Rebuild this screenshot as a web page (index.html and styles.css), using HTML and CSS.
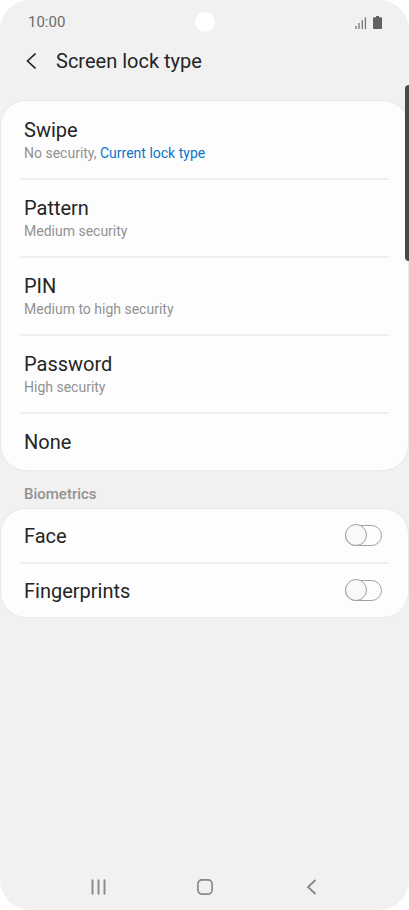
FILE: index.html
```html
<!DOCTYPE html>
<html lang="en">
<head>
<meta charset="utf-8">
<meta name="viewport" content="width=device-width, initial-scale=1">
<title>Screen lock type</title>
<link rel="stylesheet" href="styles.css">
</head>
<body>
<div class="phone">
  <div class="status">
    <span>10:00</span>
    <span class="camera"></span>
    <span class="status-icons">
      <svg width="12" height="12" viewBox="0 0 12 12" stroke="#777" stroke-width="1.3"><path d="M1 9v3M4 6v6M7.3 3v9M10.4 0.500v11.500"/></svg>
      <svg width="9" height="13" viewBox="0 0 9 13" fill="#626262"><path d="M3 0h3v1.200h2q1 0 1 1v9.800q0 1-1 1H1q-1 0-1-1V2.200q0-1 1-1h2z"/></svg>
    </span>
  </div>
  <header class="header">
    <button class="back" type="button" aria-label="Back">
      <svg width="10" height="16" viewBox="0 0 10 16" fill="none" stroke="#252525" stroke-width="1.600"><path d="M9.500 .5L1.500 8l8 7.500"/></svg>
    </button>
    <h1>Screen lock type</h1>
  </header>
  <span class="side-key"></span>
  <main>
    <div class="card">
      <button class="row option" type="button"><span class="title">Swipe</span><span class="sub">No security, <span class="current">Current lock type</span></span></button>
      <button class="row option" type="button"><span class="title">Pattern</span><span class="sub">Medium security</span></button>
      <button class="row option" type="button"><span class="title">PIN</span><span class="sub">Medium to high security</span></button>
      <button class="row option" type="button"><span class="title">Password</span><span class="sub">High security</span></button>
      <button class="row option" type="button"><span class="title">None</span></button>
    </div>
    <h2>Biometrics</h2>
    <div class="card">
      <label class="row toggle"><span class="title">Face</span><input class="switch" type="checkbox" role="switch"></label>
      <label class="row toggle"><span class="title">Fingerprints</span><input class="switch" type="checkbox" role="switch"></label>
    </div>
  </main>
  <nav class="nav">
    <button type="button" aria-label="Recent apps"><svg width="16" height="16" viewBox="0 0 16 16" stroke="#888" stroke-width="1.900" stroke-linecap="round"><path d="M2.500 1.300v13.400M8.500 1.300v13.400M14.500 1.300v13.400"/></svg></button>
    <button type="button" aria-label="Home"><svg width="16" height="16" viewBox="0 0 16 16" fill="none" stroke="#888" stroke-width="1.700"><rect x=".9" y=".9" width="14.200" height="14.200" rx="4"/></svg></button>
    <button type="button" aria-label="Back"><svg width="16" height="16" viewBox="0 0 16 16" fill="none" stroke="#888" stroke-width="1.800"><path d="M12.500 1L5 8l7.500 7"/></svg></button>
  </nav>
</div>
</body>
</html>
```
FILE: styles.css
```css
*, *::before { box-sizing: border-box; }
body {
  margin: 0;
  background: #fff;
  color: #252525;
  font-family: Roboto, "Liberation Sans", sans-serif;
}
button {
  padding: 0;
  border: 0;
  background: none;
  color: inherit;
  font: inherit;
  text-align: left;
}
svg { display: block; }
.phone {
  position: relative;
  display: flex;
  flex-direction: column;
  min-height: 100vh;
  border-radius: 30px;
  background: #f1f1f1;
  overflow: hidden;
}
.status {
  display: grid;
  grid-template-columns: 1fr auto 1fr;
  align-items: center;
  height: 44px;
  padding: 0 27px 0 28px;
  color: #6c6c6c;
  font-size: 15px;
}
.camera {
  width: 20px;
  height: 20px;
  border-radius: 50%;
  background: #fff;
}
.status-icons {
  display: flex;
  justify-content: flex-end;
  align-items: flex-end;
  gap: 6px;
}
.header {
  display: flex;
  align-items: center;
  gap: 20px;
  height: 34px;
  padding-left: 26px;
  margin-bottom: 22px;
}
h1, .title {
  margin: 0;
  font-size: 20px;
  font-weight: 400;
  line-height: 24px;
}
.side-key {
  position: absolute;
  z-index: 1;
  top: 85px;
  right: 0;
  width: 4px;
  height: 176px;
  border-radius: 4px 0 0 4px;
  background: #484848;
}
.card {
  padding: 0 19px;
  border: 1px solid #e9e9e9;
  border-radius: 26px;
  background: #fdfdfd;
}
.row {
  display: flex;
  width: 100%;
  padding: 0 4px;
}
.row + .row { border-top: 2px solid #eee; }
.option {
  flex-direction: column;
  justify-content: center;
  min-height: 78px;
  padding-top: 2px;
}
.option:first-child { min-height: 77px; }
.option:last-child {
  min-height: 58px;
  padding-top: 0;
}
.sub {
  color: #929292;
  font-size: 14px;
  line-height: 22px;
}
.current { color: #0b74cb; }
h2 {
  margin: 0;
  padding: 9px 24px 0;
  color: #929292;
  font-size: 15px;
  font-weight: 500;
  line-height: 28px;
}
.toggle {
  align-items: center;
  justify-content: space-between;
  min-height: 55px;
  padding-right: 7px;
}
.toggle:first-child { min-height: 53px; }
.switch {
  position: relative;
  appearance: none;
  width: 37px;
  height: 21px;
  margin: 0;
  border: 1px solid #a0a0a0;
  border-radius: 11px;
}
.switch::before {
  content: "";
  position: absolute;
  top: -2px;
  left: -1px;
  width: 22px;
  height: 22px;
  border: 1px solid #a0a0a0;
  border-radius: 50%;
  background: #f9f9f9;
}
.nav {
  display: flex;
  justify-content: space-evenly;
  align-items: center;
  height: 46px;
  margin-top: auto;
}
.nav button {
  display: grid;
  place-items: center;
}
```
